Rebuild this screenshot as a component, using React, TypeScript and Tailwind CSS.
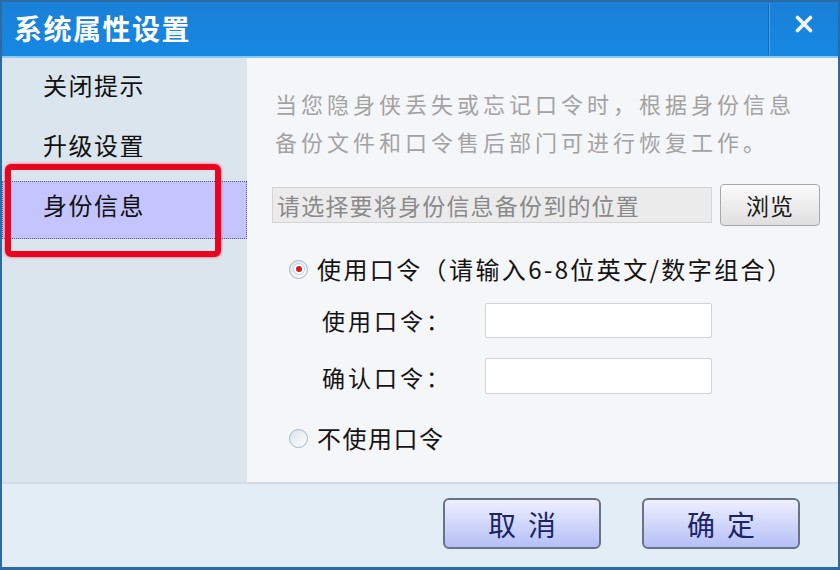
import React from "react";

const font = { fontFamily: '"Noto Sans CJK SC", "Noto Sans", sans-serif' };

function Radio({ checked }: { checked?: boolean }) {
  return (
    <div className="w-[19px] h-[19px] min-w-[19px] rounded-full border border-[#a9b6c6] bg-gradient-to-br from-[#dce3eb] to-white flex items-center justify-center shrink-0">
      {checked && (
        <div className="w-[12px] h-[12px] rounded-full bg-white border border-[#c3d0e4] flex items-center justify-center">
          <div className="w-[6px] h-[6px] rounded-full bg-[#d41c1c]" />
        </div>
      )}
    </div>
  );
}

export default function App() {
  return (
    <div
      className="relative w-[840px] h-[570px] bg-[#2b6aa3] p-[2px] pb-[3px] flex flex-col overflow-hidden"
      style={font}
    >
      {/* Title bar */}
      <div className="h-[56px] bg-gradient-to-b from-[#1a80d8] to-[#1588e2] flex items-stretch border-b-2 border-[#8ec8f2]">
        <div className="flex-1 flex items-center pl-[12px] pb-[3px] text-white text-[28px] font-bold tracking-[1.5px] leading-none">
          系统属性设置
        </div>
        <div className="w-[2px] my-[1px] bg-[#136bb8] border-r border-[#4aa0e6]" />
        <div className="w-[68px] flex items-start justify-center pt-[13px]">
          <svg width="18" height="18" viewBox="0 0 18 18">
            <path d="M2.5 2.5 L15.5 15.5 M15.5 2.5 L2.5 15.5" stroke="#f2f8ff" strokeWidth="3.6" strokeLinecap="round" />
          </svg>
        </div>
      </div>

      {/* Body */}
      <div className="flex h-[424px]">
        {/* Sidebar */}
        <div className="w-[245px] bg-[#dbe5ee] flex flex-col pt-[3px] text-[24px] text-[#111] tracking-[1.5px] leading-[24px]">
          <div className="h-[60px] pt-[12px] pl-[41px]">关闭提示</div>
          <div className="h-[60px] pt-[12px] pl-[41px]">升级设置</div>
          <div className="h-[58px] pt-[11px] pl-[40px] bg-[#c4c4fe] border border-dotted border-[#555c80]">身份信息</div>
        </div>

        {/* Content */}
        <div className="flex-1 bg-[#f5f6f7] flex flex-col pl-[25px] pt-[26px]">
          <div className="text-[22px] leading-[38px] tracking-[4px] text-[#a3a3a3] pl-[3px]">
            <div>当您隐身侠丢失或忘记口令时，根据身份信息</div>
            <div>备份文件和口令售后部门可进行恢复工作。</div>
          </div>

          <div className="mt-[24px] flex items-center h-[42px]">
            <div className="w-[440px] h-[36px] bg-[#ebebeb] border border-[#d4d4d4] flex items-center pl-[4px] text-[23px] text-[#8a8a8a] leading-none tracking-[1.2px]">
              请选择要将身份信息备份到的位置
            </div>
            <div className="ml-[8px] w-[100px] h-[42px] rounded-[4px] border border-[#a8a8a8] bg-gradient-to-b from-[#fbfbfb] to-[#dfdfdf] flex items-center justify-center text-[23px] text-[#1a1a1a] leading-none tracking-[1px]">
              浏览
            </div>
          </div>

          <div className="mt-[25px] h-[36px] flex items-center pl-[17px] text-[24px] text-[#141414] leading-none tracking-[2.4px]">
            <Radio checked />
            <span className="ml-[9px]">使用口令（请输入6-8位英文/数字组合）</span>
          </div>

          <div className="mt-[16px] h-[35px] flex items-center pl-[50px] text-[23px] text-[#141414] leading-none">
            <span className="w-[163px] tracking-[3px]">使用口令：</span>
            <div className="w-[227px] h-[35px] bg-white border border-[#d2d2d2] rounded-[2px]" />
          </div>

          <div className="mt-[20px] h-[36px] flex items-center pl-[50px] text-[23px] text-[#141414] leading-none">
            <span className="w-[163px] tracking-[3px] pt-[3px]">确认口令：</span>
            <div className="w-[227px] h-[36px] bg-white border border-[#d2d2d2] rounded-[2px]" />
          </div>

          <div className="mt-[26px] h-[36px] flex items-center pl-[17px] text-[24px] text-[#141414] leading-none tracking-[1.5px]">
            <Radio />
            <span className="ml-[9px]">不使用口令</span>
          </div>
        </div>
      </div>

      {/* Footer */}
      <div className="flex-1 bg-[#e2edf5] border-t-2 border-[#d3dce3] flex justify-end items-start pt-[14px] pr-[38px] gap-[41px]">
        <div className="w-[158px] h-[51px] rounded-[6px] border-2 border-[#6b7186] bg-gradient-to-b from-[#eef0fd] to-[#b5bff7] flex items-center justify-center text-[28px] text-[#1c2468] leading-none tracking-[12px] pl-[12px]">
          取消
        </div>
        <div className="w-[158px] h-[51px] rounded-[6px] border-2 border-[#6b7186] bg-gradient-to-b from-[#eef0fd] to-[#b5bff7] flex items-center justify-center text-[28px] text-[#1c2468] leading-none tracking-[12px] pl-[12px]">
          确定
        </div>
      </div>

      {/* Red highlight annotation */}
      <div className="absolute left-[5px] top-[164px] w-[216px] h-[93px] border-[6px] border-[#e8051f] rounded-[6px] shadow-[0_0_3px_#ff4a5a]" />
    </div>
  );
}
